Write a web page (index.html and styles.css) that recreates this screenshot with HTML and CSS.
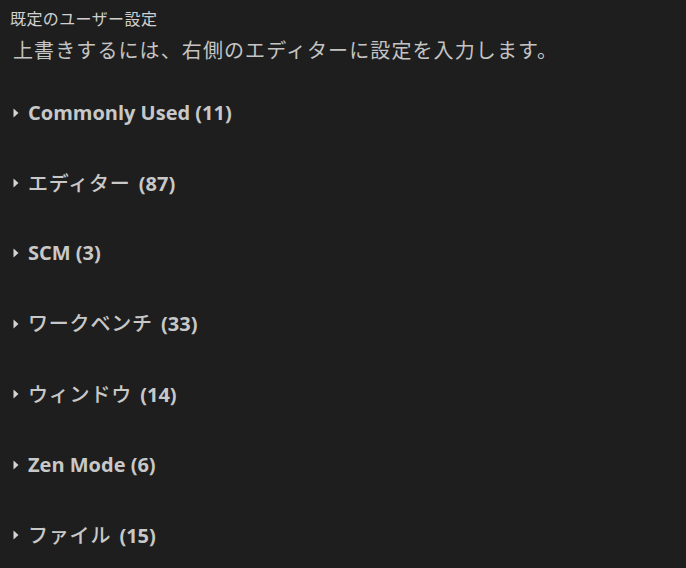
FILE: index.html
```html
<!DOCTYPE html>
<html lang="ja">
<head>
<meta charset="utf-8">
<link rel="stylesheet" href="styles.css">
</head>
<body>
<div class="page">
  <div class="title">既定のユーザー設定</div>
  <div class="subtitle">上書きするには、右側のエディターに設定を入力します。</div>
  <ul class="groups">
    <li class="group"><svg class="twisty" width="6" height="10" viewBox="0 0 6 10"><path d="M0.5 0.5 L5.5 5 L0.5 9.5 Z" fill="#d4d4d4"/></svg><span class="label">Commonly Used (11)</span></li>
    <li class="group"><svg class="twisty" width="6" height="10" viewBox="0 0 6 10"><path d="M0.5 0.5 L5.5 5 L0.5 9.5 Z" fill="#d4d4d4"/></svg><span class="label"><span class="ja">エディター</span> (87)</span></li>
    <li class="group"><svg class="twisty" width="6" height="10" viewBox="0 0 6 10"><path d="M0.5 0.5 L5.5 5 L0.5 9.5 Z" fill="#d4d4d4"/></svg><span class="label">SCM (3)</span></li>
    <li class="group"><svg class="twisty" width="6" height="10" viewBox="0 0 6 10"><path d="M0.5 0.5 L5.5 5 L0.5 9.5 Z" fill="#d4d4d4"/></svg><span class="label"><span class="ja">ワークベンチ</span> (33)</span></li>
    <li class="group"><svg class="twisty" width="6" height="10" viewBox="0 0 6 10"><path d="M0.5 0.5 L5.5 5 L0.5 9.5 Z" fill="#d4d4d4"/></svg><span class="label"><span class="ja">ウィンドウ</span> (14)</span></li>
    <li class="group"><svg class="twisty" width="6" height="10" viewBox="0 0 6 10"><path d="M0.5 0.5 L5.5 5 L0.5 9.5 Z" fill="#d4d4d4"/></svg><span class="label">Zen Mode (6)</span></li>
    <li class="group"><svg class="twisty" width="6" height="10" viewBox="0 0 6 10"><path d="M0.5 0.5 L5.5 5 L0.5 9.5 Z" fill="#d4d4d4"/></svg><span class="label"><span class="ja">ファイル</span> (15)</span></li>
  </ul>
</div>
</body>
</html>
```
FILE: styles.css
```css
html, body {
  margin: 0;
  padding: 0;
  background: #1e1e1e;
  overflow: hidden;
}
.page {
  padding: 8px 10px 0 10px;
  font-family: "Open Sans", "Noto Sans CJK JP", sans-serif;
  color: #cccccc;
}
.title {
  font-size: 16px;
  line-height: 20px;
  height: 20px;
  letter-spacing: 0.4px;
  font-family: "Noto Sans CJK JP", sans-serif;
  color: #d0d0d0;
}
.subtitle {
  margin-top: 8px;
  font-size: 20px;
  line-height: 28px;
  height: 28px;
  padding-left: 3px;
  letter-spacing: 1.1px;
  font-family: "Noto Sans CJK JP", sans-serif;
  color: #c4c4c4;
}
.groups {
  list-style: none;
  margin: 13.5px 0 0 0;
  padding: 0;
}
.group {
  height: 70.4px;
  display: flex;
  align-items: center;
  gap: 9px;
  padding-left: 3px;
}
.twisty {
  flex: none;
}
.label {
  font-size: 20px;
  font-weight: 700;
  color: #c8c8c8;
  line-height: 26px;
  white-space: nowrap;
}
.ja {
  font-family: "Noto Sans CJK JP", sans-serif;
  font-weight: 500;
  letter-spacing: 0.8px;
  margin-right: 3px;
}
```
